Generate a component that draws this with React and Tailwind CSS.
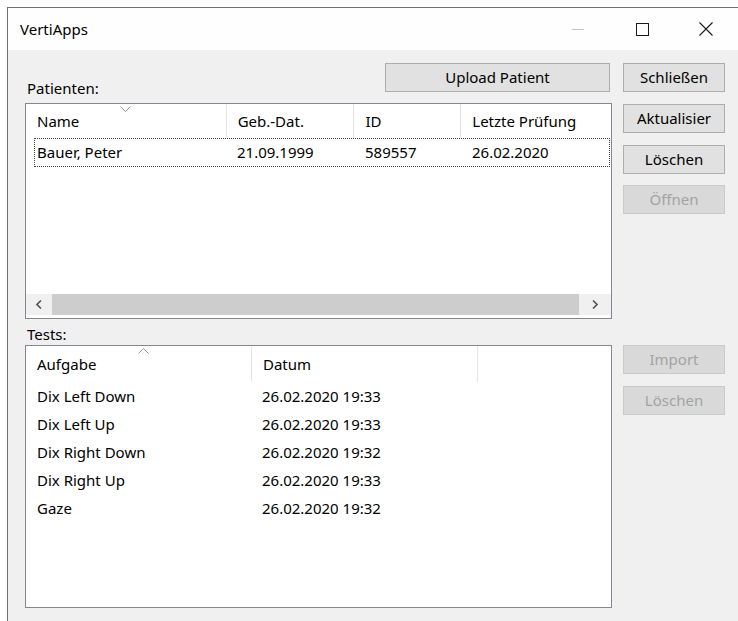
import React from "react";

const font = { fontFamily: '"Noto Sans", "Segoe UI", sans-serif' };

function Btn({ children, disabled, className = "" }) {
  return (
    <button
      className={`h-[29px] border text-[15px] leading-none ${
        disabled
          ? "bg-[#d9d9d9] border-[#cacaca] text-[#a3a3a3]"
          : "bg-[#e1e1e1] border-[#adadad] text-black"
      } ${className}`}
    >
      {children}
    </button>
  );
}

function Chevron({ up }) {
  return (
    <svg width="11" height="6" viewBox="0 0 11 6" className="absolute top-[2px]">
      <path
        d={up ? "M0.5 5.5 L5.5 0.5 L10.5 5.5" : "M0.5 0.5 L5.5 5.5 L10.5 0.5"}
        fill="none"
        stroke="#9a9a9a"
        strokeWidth="1"
      />
    </svg>
  );
}

function HeaderCell({ width, children, sep = true, chevronAt, up }) {
  return (
    <div
      className={`relative h-full flex items-center pl-[11px] ${sep ? "border-r border-[#e5e5e5]" : ""}`}
      style={{ width }}
    >
      {chevronAt != null && (
        <div className="absolute top-0" style={{ left: chevronAt }}>
          <Chevron up={up} />
        </div>
      )}
      {children}
    </div>
  );
}

const tests = [
  ["Dix Left Down", "26.02.2020 19:33"],
  ["Dix Left Up", "26.02.2020 19:33"],
  ["Dix Right Down", "26.02.2020 19:32"],
  ["Dix Right Up", "26.02.2020 19:33"],
  ["Gaze", "26.02.2020 19:32"],
];

export default function App() {
  return (
    <div className="w-[738px] h-[621px] bg-white overflow-hidden text-black" style={font}>
      <div className="ml-[7px] mt-[7px] h-[614px] border-l border-t border-[#707070] flex flex-col">
        {/* title bar */}
        <div className="h-[42px] bg-[#fdfefd] flex items-center">
          <span className="ml-[12px] text-[15px]">VertiApps</span>
          <div className="ml-auto flex items-center h-full">
            <div className="w-[46px] flex justify-center">
              <div className="w-[12px] h-px bg-[#c4c4c4]" />
            </div>
            <div className="w-[18px]" />
            <div className="w-[46px] flex justify-center">
              <div className="w-[13px] h-[13px] border border-[#1a1a1a]" />
            </div>
            <div className="w-[18px]" />
            <div className="w-[46px] flex justify-center">
              <svg width="14" height="14" viewBox="0 0 14 14">
                <path d="M0.5 0.5 L13.5 13.5 M13.5 0.5 L0.5 13.5" stroke="#1a1a1a" strokeWidth="1.1" />
              </svg>
            </div>
            <div className="w-[9px]" />
          </div>
        </div>

        {/* client area */}
        <div className="flex-1 bg-[#f0f0f0] flex pl-[17px] pt-[13px] gap-[11px]">
          <div className="w-[587px] flex flex-col">
            <div className="flex items-start">
              <span className="mt-[15px] ml-[2px] text-[15px] leading-[20px]">Patienten:</span>
              <Btn className="ml-auto mr-[2px] w-[225px]">Upload Patient</Btn>
            </div>

            {/* patients list */}
            <div className="mt-[5px] h-[216px] bg-white border border-[#828790] flex flex-col text-[15px]">
              <div className="h-[34px] flex">
                <HeaderCell width={201} chevronAt={94}>Name</HeaderCell>
                <HeaderCell width={128}>Geb.-Dat.</HeaderCell>
                <HeaderCell width={107}>ID</HeaderCell>
                <HeaderCell width={150} sep={false}>Letzte Prüfung</HeaderCell>
              </div>
              <div className="ml-[8px] mr-[1px] h-[29px] border border-dotted border-[#444] flex items-center">
                <span className="w-[192px] pl-[2px]">Bauer, Peter</span>
                <span className="w-[128px] pl-[10px]">21.09.1999</span>
                <span className="w-[107px] pl-[10px]">589557</span>
                <span className="pl-[10px]">26.02.2020</span>
              </div>
              <div className="flex-1" />
              {/* horizontal scrollbar */}
              <div className="h-[21px] mb-[3px] flex items-center bg-[#f0f0f0]">
                <div className="w-[26px] h-full flex items-center justify-center">
                  <svg width="6" height="9" viewBox="0 0 6 9">
                    <path d="M5 0.5 L1 4.5 L5 8.5" fill="none" stroke="#555" strokeWidth="1.6" />
                  </svg>
                </div>
                <div className="flex-1 h-[21px] bg-[#cdcdcd]" />
                <div className="w-[32px] h-full flex items-center justify-center">
                  <svg width="6" height="9" viewBox="0 0 6 9">
                    <path d="M1 0.5 L5 4.5 L1 8.5" fill="none" stroke="#555" strokeWidth="1.6" />
                  </svg>
                </div>
              </div>
            </div>

            <span className="mt-[5px] ml-[2px] text-[15px] leading-[20px]">Tests:</span>

            {/* tests list */}
            <div className="mt-[1px] h-[263px] bg-white border border-[#828790] flex flex-col text-[15px]">
              <div className="h-[36px] flex">
                <HeaderCell width={226} chevronAt={112} up>Aufgabe</HeaderCell>
                <HeaderCell width={226}>Datum</HeaderCell>
              </div>
              <div>
                {tests.map(([task, date]) => (
                  <div key={task} className="h-[28px] flex items-center">
                    <span className="w-[236px] pl-[11px]">{task}</span>
                    <span>{date}</span>
                  </div>
                ))}
              </div>
            </div>
          </div>

          {/* side buttons */}
          <div className="w-[102px] flex flex-col">
            <Btn>Schließen</Btn>
            <Btn className="mt-[12px]">Aktualisier</Btn>
            <Btn className="mt-[12px]">Löschen</Btn>
            <Btn disabled className="mt-[11px]">Öffnen</Btn>
            <Btn disabled className="mt-[131px]">Import</Btn>
            <Btn disabled className="mt-[12px]">Löschen</Btn>
          </div>
        </div>
      </div>
    </div>
  );
}
